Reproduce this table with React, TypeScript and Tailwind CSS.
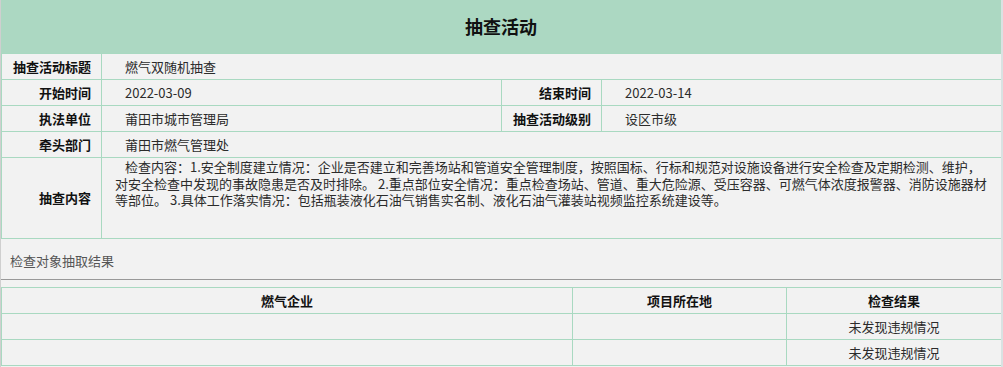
import React from "react";

const font = {
  fontFamily: '"Noto Sans CJK SC", "Noto Sans", sans-serif',
};

const labelCls =
  "w-[100px] border border-[#a9d9c1] pr-[10px] text-right text-[13px] font-bold text-[#111] h-[26px] align-middle";
const valueCls =
  "border border-[#a9d9c1] pl-[23px] text-left text-[13px] text-[#2b2b2b] h-[26px] align-middle";

const content =
  "检查内容：1.安全制度建立情况：企业是否建立和完善场站和管道安全管理制度，按照国标、行标和规范对设施设备进行安全检查及定期检测、维护，对安全检查中发现的事故隐患是否及时排除。 2.重点部位安全情况：重点检查场站、管道、重大危险源、受压容器、可燃气体浓度报警器、消防设施器材等部位。 3.具体工作落实情况：包括瓶装液化石油气销售实名制、液化石油气灌装站视频监控系统建设等。";

const results = [
  { company: "", place: "", result: "未发现违规情况" },
  { company: "", place: "", result: "未发现违规情况" },
];

const App = () => {
  return (
    <div
      className="w-[1003px] h-[367px] overflow-hidden bg-[#f2f2f2] border-l border-[#cfcfcf] border-r-2 border-r-[#d9e2e2]"
      style={font}
    >
      {/* title */}
      <div className="h-[53px] bg-[#acd8c2] flex items-center justify-center">
        <h1 className="text-[18px] font-bold text-[#111]">抽查活动</h1>
      </div>

      <table className="w-[1000px] border-collapse table-fixed">
        <colgroup>
          <col className="w-[100px]" />
          <col className="w-[400px]" />
          <col className="w-[100px]" />
          <col className="w-[400px]" />
        </colgroup>
        <tbody>
          <tr>
            <td className={labelCls}>抽查活动标题</td>
            <td className={valueCls} colSpan={3}>燃气双随机抽查</td>
          </tr>
          <tr>
            <td className={labelCls}>开始时间</td>
            <td className={valueCls}>2022-03-09</td>
            <td className={labelCls}>结束时间</td>
            <td className={valueCls}>2022-03-14</td>
          </tr>
          <tr>
            <td className={labelCls}>执法单位</td>
            <td className={valueCls}>莆田市城市管理局</td>
            <td className={labelCls}>抽查活动级别</td>
            <td className={valueCls}>设区市级</td>
          </tr>
          <tr>
            <td className={labelCls}>牵头部门</td>
            <td className={valueCls} colSpan={3}>莆田市燃气管理处</td>
          </tr>
          <tr>
            <td className="w-[100px] h-[81px] border border-[#a9d9c1] pr-[10px] text-right text-[13px] font-bold text-[#111] align-middle">
              抽查内容
            </td>
            <td
              colSpan={3}
              className="h-[81px] border border-[#a9d9c1] pl-[13px] pr-[12px] pt-[1px] align-top text-[13px] leading-[16.7px] text-[#2b2b2b] indent-[10px]"
            >
              {content}
            </td>
          </tr>
        </tbody>
      </table>

      <div className="h-[41px] flex items-center pl-[9px] pt-[4px] text-[13px] text-[#555] border-b border-[#999] w-[1000px]">
        检查对象抽取结果
      </div>

      <table className="mt-[7px] w-[1000px] border-collapse table-fixed">
        <colgroup>
          <col className="w-[571px]" />
          <col className="w-[214px]" />
          <col className="w-[215px]" />
        </colgroup>
        <thead>
          <tr>
            <th className="h-[26px] border border-[#a9d9c1] text-[13px] font-bold text-[#111]">燃气企业</th>
            <th className="h-[26px] border border-[#a9d9c1] text-[13px] font-bold text-[#111]">项目所在地</th>
            <th className="h-[26px] border border-[#a9d9c1] text-[13px] font-bold text-[#111]">检查结果</th>
          </tr>
        </thead>
        <tbody>
          {results.map((r, i) => (
            <tr key={i}>
              <td className="h-[26px] border border-[#a9d9c1] text-center text-[13px] text-[#2b2b2b]">{r.company}</td>
              <td className="h-[26px] border border-[#a9d9c1] text-center text-[13px] text-[#2b2b2b]">{r.place}</td>
              <td className="h-[26px] border border-[#a9d9c1] text-center text-[13px] text-[#2b2b2b]">{r.result}</td>
            </tr>
          ))}
        </tbody>
      </table>
    </div>
  );
};

export default App;
